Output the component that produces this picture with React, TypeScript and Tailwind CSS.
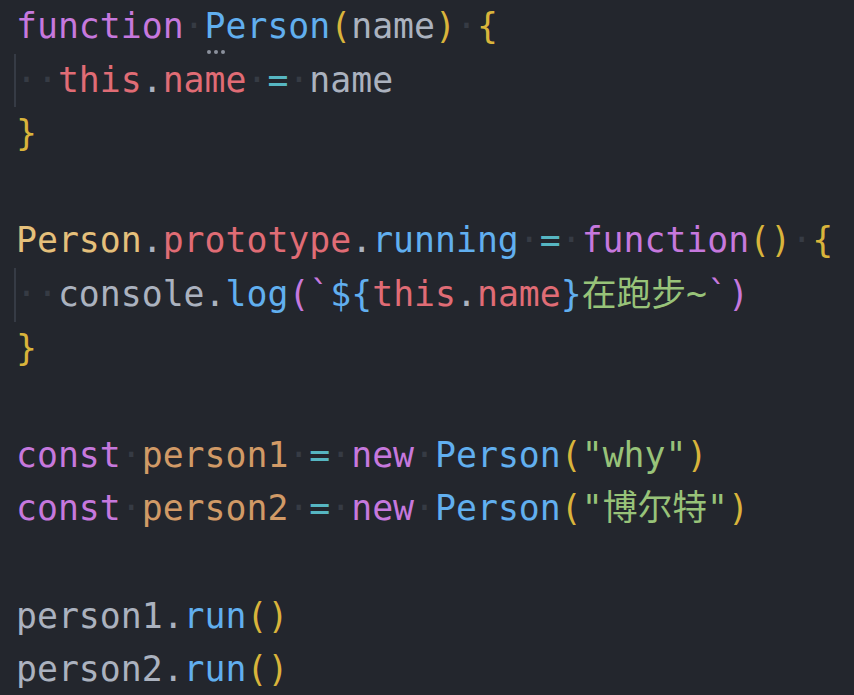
import React from 'react';

type Tok = [string, string];

const C = {
  kw: 'text-[#c678dd]',
  fn: 'text-[#61afef]',
  brace: 'text-[#d9b43b]',
  id: 'text-[#abb2bf]',
  red: 'text-[#e06c75]',
  op: 'text-[#56b6c2]',
  cls: 'text-[#e5c07b]',
  num: 'text-[#d19a66]',
  str: 'text-[#98c379]',
  ws: 'text-[#363b44]',
};

const sp: Tok = ['·', C.ws];

const lines: { toks: Tok[]; indent?: boolean }[] = [
  {
    toks: [
      ['function', C.kw], sp, ['Person', C.fn], ['(', C.brace], ['name', C.id], [')', C.brace], sp, ['{', C.brace],
    ],
  },
  {
    indent: true,
    toks: [sp, sp, ['this', C.red], ['.', C.id], ['name', C.red], sp, ['=', C.op], sp, ['name', C.id]],
  },
  { toks: [['}', C.brace]] },
  { toks: [] },
  {
    toks: [
      ['Person', C.cls], ['.', C.id], ['prototype', C.red], ['.', C.id], ['running', C.fn], sp, ['=', C.op], sp,
      ['function', C.kw], ['()', C.brace], sp, ['{', C.brace],
    ],
  },
  {
    indent: true,
    toks: [
      sp, sp, ['console', C.id], ['.', C.id], ['log', C.fn], ['(', C.kw], ['`', C.kw], ['${', C.fn],
      ['this', C.red], ['.', C.id], ['name', C.red], ['}', C.fn], ['在跑步~', C.str], ['`', C.kw], [')', C.kw],
    ],
  },
  { toks: [['}', C.brace]] },
  { toks: [] },
  {
    toks: [
      ['const', C.kw], sp, ['person1', C.num], sp, ['=', C.op], sp, ['new', C.kw], sp, ['Person', C.fn],
      ['(', C.brace], ['"why"', C.str], [')', C.brace],
    ],
  },
  {
    toks: [
      ['const', C.kw], sp, ['person2', C.num], sp, ['=', C.op], sp, ['new', C.kw], sp, ['Person', C.fn],
      ['(', C.brace], ['"博尔特"', C.str], [')', C.brace],
    ],
  },
  { toks: [] },
  { toks: [['person1', C.id], ['.', C.id], ['run', C.fn], ['()', C.brace]] },
  { toks: [['person2', C.id], ['.', C.id], ['run', C.fn], ['()', C.brace]] },
];

const App: React.FC = () => {
  return (
    <div
      className="w-[854px] h-[695px] overflow-hidden bg-[#23262d] text-[34.8px] leading-[53.6px] whitespace-pre"
      style={{ fontFamily: '"DejaVu Sans Mono", "Noto Sans CJK SC", monospace' }}
    >
      {lines.map((line, i) => (
        <div key={i} className="h-[53.6px] pl-[14px]">
          <div
            className={`h-full border-l-2 ${
              line.indent ? 'border-[#363b45]' : 'border-transparent'
            }`}
          >
            {line.toks.map(([t, c], j) =>
              i === 0 && j === 2 ? (
                <span key={j} className={`relative ${c}`}>
                  {t}
                  {/* hint dots under "P" */}
                  <span className="absolute left-[2px] top-[44px] flex gap-[3px]">
                    <span className="w-[4px] h-[4px] rounded-full bg-[#8b919c]" />
                    <span className="w-[4px] h-[4px] rounded-full bg-[#8b919c]" />
                    <span className="w-[4px] h-[4px] rounded-full bg-[#8b919c]" />
                  </span>
                </span>
              ) : (
                <span key={j} className={c}>
                  {t}
                </span>
              )
            )}
          </div>
        </div>
      ))}
    </div>
  );
};

export default App;
